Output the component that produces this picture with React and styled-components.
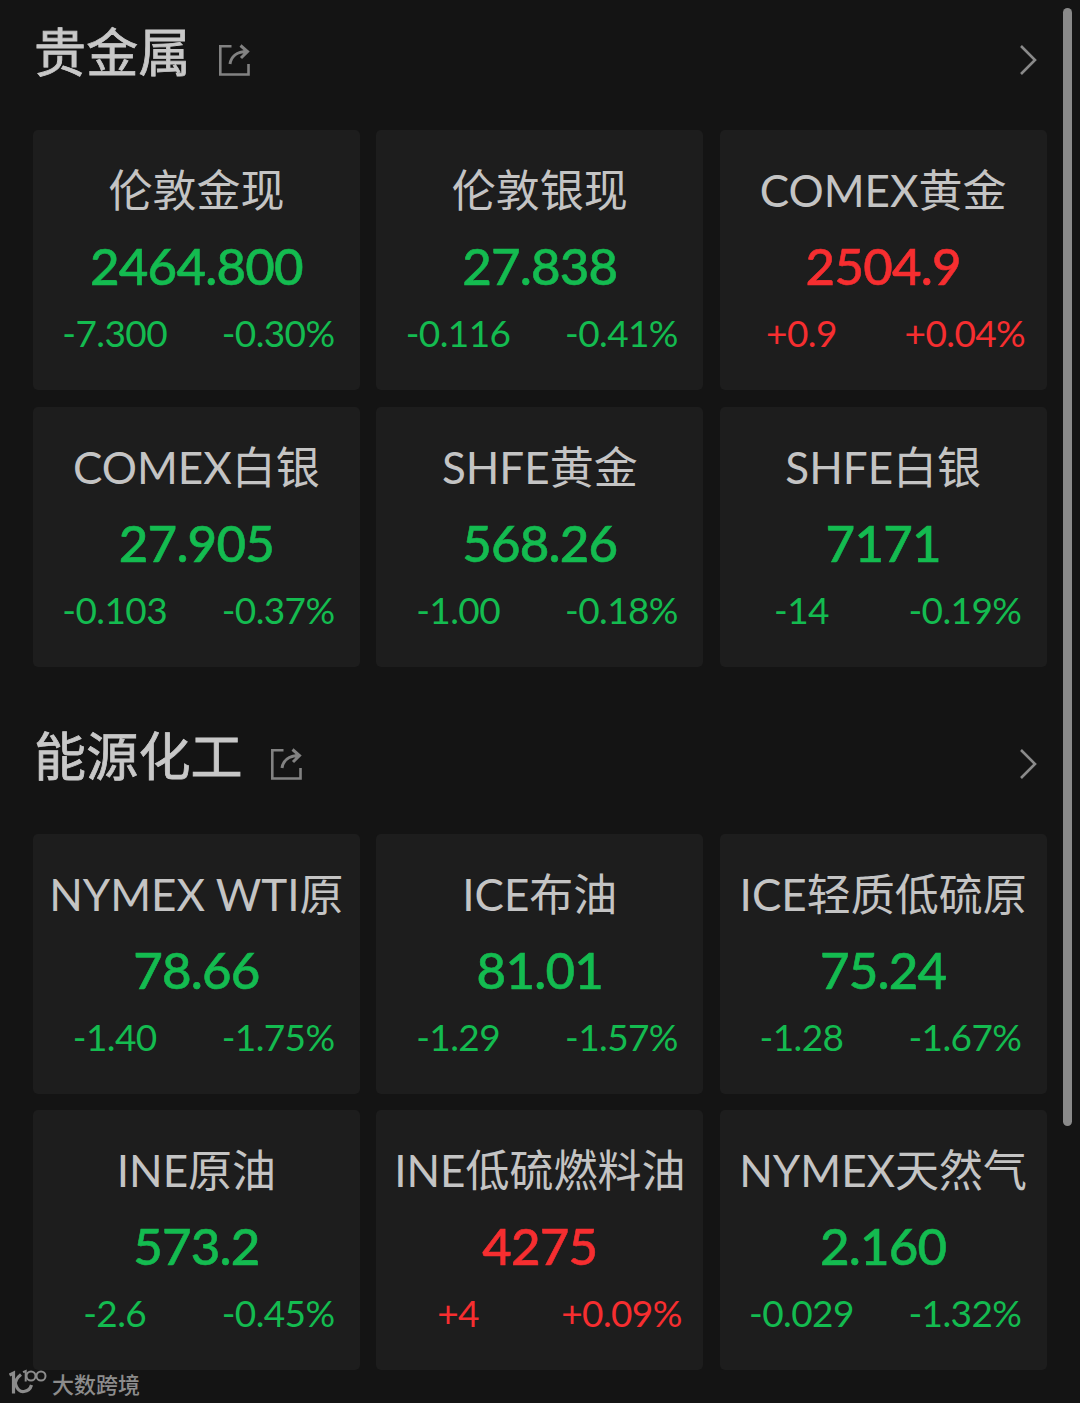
import styled, { createGlobalStyle } from "styled-components";

const sections = [
  {
    title: "贵金属",
    quotes: [
      { name: "伦敦金现", price: "2464.800", change: "-7.300", percent: "-0.30%" },
      { name: "伦敦银现", price: "27.838", change: "-0.116", percent: "-0.41%" },
      { name: "COMEX黄金", price: "2504.9", change: "+0.9", percent: "+0.04%" },
      { name: "COMEX白银", price: "27.905", change: "-0.103", percent: "-0.37%" },
      { name: "SHFE黄金", price: "568.26", change: "-1.00", percent: "-0.18%" },
      { name: "SHFE白银", price: "7171", change: "-14", percent: "-0.19%" },
    ],
  },
  {
    title: "能源化工",
    quotes: [
      { name: "NYMEX WTI原", price: "78.66", change: "-1.40", percent: "-1.75%" },
      { name: "ICE布油", price: "81.01", change: "-1.29", percent: "-1.57%" },
      { name: "ICE轻质低硫原", price: "75.24", change: "-1.28", percent: "-1.67%" },
      { name: "INE原油", price: "573.2", change: "-2.6", percent: "-0.45%" },
      { name: "INE低硫燃料油", price: "4275", change: "+4", percent: "+0.09%" },
      { name: "NYMEX天然气", price: "2.160", change: "-0.029", percent: "-1.32%" },
    ],
  },
];

function ShareIcon() {
  return (
    <svg width="34" height="34" viewBox="0 0 34 34" fill="none" stroke="#828282" strokeWidth="2.6">
      <path d="M13.5 3.3H2.3v28.2h28.2V21" />
      <path d="M12 21C13 14 18.500 8.500 29 8.500M22.500 2.500l7 6-6.500 6.500" strokeWidth="3" />
    </svg>
  );
}

function ArrowIcon() {
  return (
    <svg width="20" height="32" viewBox="0 0 20 32" fill="none" stroke="#8a8a8a" strokeWidth="2.6">
      <path d="M2 2l14 14-14 14" />
    </svg>
  );
}

function WatermarkLogo() {
  return (
    <svg width="38" height="27" viewBox="0 0 38 27" fill="none" stroke="#8c8c8c" strokeWidth="3.2">
      <path d="M.5 6l4-2v20.500" />
      <path d="M12 5.500C7.500 9 5 12 7 16.500c1.500 4 4.500 6.500 8 6 4-.5 6.500-3 7.500-6.500" />
      <path d="M14 3.200l2.700-1.200v10.500" strokeWidth="2" />
      <circle cx="22" cy="7" r="4.500" strokeWidth="2" />
      <circle cx="32" cy="7" r="4.500" strokeWidth="2" />
    </svg>
  );
}

export default function App() {
  return (
    <Page>
      <GlobalStyle />
      <Content>
        {sections.map(({ title, quotes }) => (
          <Section key={title}>
            <SectionHeader>
              <h2>{title}</h2>
              <ShareIcon />
              <ArrowIcon />
            </SectionHeader>
            <Grid>
              {quotes.map((quote) => (
                <Card key={quote.name} $up={quote.change.startsWith("+")}>
                  <Name>{quote.name}</Name>
                  <Price>{quote.price}</Price>
                  <Changes>
                    <span>{quote.change}</span>
                    <span>{quote.percent}</span>
                  </Changes>
                </Card>
              ))}
            </Grid>
          </Section>
        ))}
        <Watermark>
          <WatermarkLogo />
          <span>大数跨境</span>
        </Watermark>
      </Content>
      <Scrollbar />
    </Page>
  );
}

const GlobalStyle = createGlobalStyle`
  * {
    box-sizing: border-box;
    margin: 0;
  }

  body {
    background-color: #141414;
    font-family: Lato, "Noto Sans CJK SC", sans-serif;
  }
`;

const Page = styled.div`
  display: flex;
  width: 1080px;
  height: 1403px;
  overflow: hidden;
  background-color: #141414;
`;

const Content = styled.main`
  width: 1063px;
  padding-left: 33px;
`;

const Section = styled.section`
  height: 703.6px;

  &:nth-of-type(2) {
    height: 664px;
  }
`;

const SectionHeader = styled.header`
  display: flex;
  align-items: flex-start;
  height: 130px;
  padding: 12px 24px 0 1px;

  h2 {
    color: #c8c8c8;
    font-size: 52px;
    font-weight: 400;
    line-height: 80px;
    letter-spacing: 0.2px;
    -webkit-text-stroke: 0.8px #c8c8c8;
  }

  svg {
    margin: 31px 0 0 27px;
  }

  svg:last-child {
    margin: 32px 0 0 auto;
  }
`;

const Grid = styled.div`
  display: grid;
  grid-template-columns: repeat(3, 326.8px);
  gap: 16.6px;
`;

const Card = styled.article`
  display: flex;
  flex-direction: column;
  align-items: center;
  height: 260px;
  padding-top: 30px;
  border-radius: 5px;
  background-color: #1d1d1d;
  color: ${({ $up }) => ($up ? "#f62e30" : "#14bb50")};
`;

const Name = styled.h3`
  color: #c4c4c4;
  font-size: 44px;
  font-weight: 400;
  line-height: 60px;
  white-space: nowrap;
`;

const Price = styled.p`
  margin-top: 15px;
  font-size: 51px;
  font-weight: 500;
  line-height: 62px;
  letter-spacing: -0.8px;
  -webkit-text-stroke: 0.6px currentColor;
`;

const Changes = styled.div`
  display: grid;
  grid-template-columns: 1fr 1fr;
  width: 100%;
  margin-top: 13px;
  font-size: 37px;
  line-height: 45px;
  text-align: center;
  letter-spacing: -0.6px;
`;

const Watermark = styled.footer`
  display: flex;
  align-items: center;
  gap: 5px;
  height: 30px;
  margin-left: -24px;
  color: #8c8c8c;
  font-size: 22px;
  font-weight: 500;
`;

const Scrollbar = styled.div`
  width: 9px;
  height: 1118px;
  margin-top: 8px;
  border-radius: 5px;
  background-color: #8a8a8a;
`;
